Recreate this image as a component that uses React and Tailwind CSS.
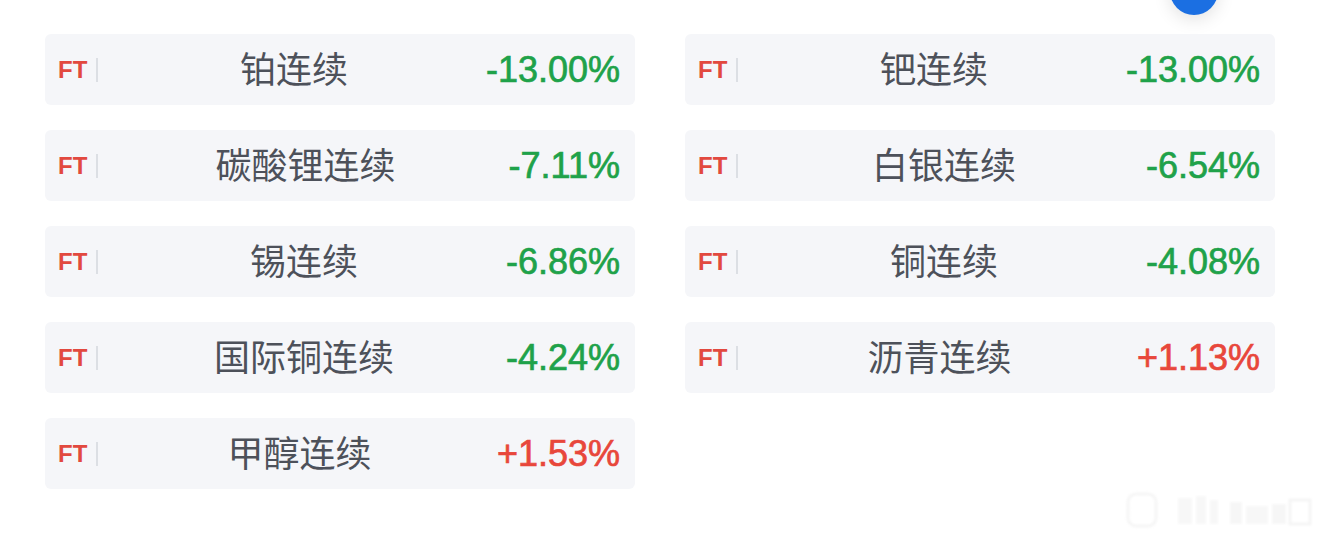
import React from "react";

const left = [
  ["铂连续", "-13.00%", false],
  ["碳酸锂连续", "-7.11%", false],
  ["锡连续", "-6.86%", false],
  ["国际铜连续", "-4.24%", false],
  ["甲醇连续", "+1.53%", true],
];
const right = [
  ["钯连续", "-13.00%", false],
  ["白银连续", "-6.54%", false],
  ["铜连续", "-4.08%", false],
  ["沥青连续", "+1.13%", true],
];

function Card({ name, pct, up }) {
  return (
    <div className="h-[71px] w-[590px] rounded-[6px] bg-[#f5f6f9] flex items-center pl-[13px] pr-[15px]">
      <span
        className="text-[24px] font-bold text-[#e2493f] leading-none"
        style={{ fontFamily: "'Liberation Sans', Arial, sans-serif" }}
      >
        FT
      </span>
      <span className="ml-[9px] w-[2px] h-[24px] bg-[#dcdfe4]" />
      <span
        className="flex-1 text-center text-[36px] leading-none text-[#4d515a] pl-[4px] pb-[5px]"
        style={{ fontFamily: "'Noto Sans CJK SC', 'Noto Sans', sans-serif" }}
      >
        {name}
      </span>
      <span
        className={`text-[36px] leading-none [-webkit-text-stroke:0.7px_currentColor] ${up ? "text-[#e8473b]" : "text-[#1fa24a]"}`}
        style={{ fontFamily: "'Liberation Sans', Arial, sans-serif" }}
      >
        {pct}
      </span>
    </div>
  );
}

export default function App() {
  return (
    <div className="relative w-[1320px] h-[541px] bg-white overflow-hidden">
      <div className="absolute left-[1170px] top-[-33px] w-[48px] h-[48px] rounded-full bg-[#1b6fe2] shadow-[0_4px_18px_rgba(0,0,0,0.12)]" />
      <div className="flex gap-[50px] pl-[45px] pt-[34px]">
        <div className="flex flex-col gap-[25px]">
          {left.map(([n, p, u]) => (
            <Card key={n} name={n} pct={p} up={u} />
          ))}
        </div>
        <div className="flex flex-col gap-[25px]">
          {right.map(([n, p, u]) => (
            <Card key={n} name={n} pct={p} up={u} />
          ))}
        </div>
      </div>
      <div className="absolute left-[1126px] top-[492px] flex items-end opacity-40 blur-[1px]">
        <svg width="190" height="36" viewBox="0 0 190 36">
          <rect x="2" y="2" width="28" height="32" rx="8" fill="none" stroke="#e8e8e8" strokeWidth="3" />
          <rect x="52" y="6" width="14" height="26" fill="#ececec" />
          <rect x="70" y="4" width="10" height="28" fill="#ededed" />
          <rect x="84" y="8" width="8" height="24" fill="#ececec" />
          <rect x="104" y="10" width="12" height="22" fill="#ebebeb" />
          <rect x="120" y="14" width="22" height="18" fill="#ececec" />
          <rect x="146" y="12" width="14" height="20" fill="#ebebeb" />
          <rect x="164" y="8" width="20" height="24" fill="none" stroke="#e6e6e6" strokeWidth="3" />
        </svg>
      </div>
    </div>
  );
}
